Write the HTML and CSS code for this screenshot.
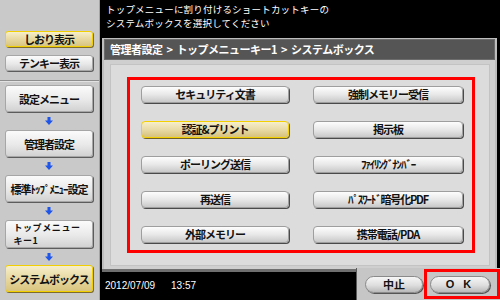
FILE: index.html
```html
<!DOCTYPE html>
<html lang="ja">
<head>
    <meta charset="UTF-8">
    <title>システムボックス選択</title>
    <link rel="stylesheet" href="styles.css">
</head>
<body>
    <div class="screen">

        <aside class="sidebar">
            <div class="side-top">
                <div class="side-btn small active">しおり表示</div>
                <div class="side-btn small">テンキー表示</div>
            </div>
            <div class="side-nav">
                <div class="side-btn">設定メニュー</div>
                <div class="arrow"><svg width="8" height="8" viewBox="0 0 8 8"><path d="M2.5 0h3v3.5H8L4 8 0 3.5h2.5z" fill="#1f55e8"/></svg></div>
                <div class="side-btn">管理者設定</div>
                <div class="arrow"><svg width="8" height="8" viewBox="0 0 8 8"><path d="M2.5 0h3v3.5H8L4 8 0 3.5h2.5z" fill="#1f55e8"/></svg></div>
                <div class="side-btn">標準ﾄｯﾌﾟﾒﾆｭｰ設定</div>
                <div class="arrow"><svg width="8" height="8" viewBox="0 0 8 8"><path d="M2.5 0h3v3.5H8L4 8 0 3.5h2.5z" fill="#1f55e8"/></svg></div>
                <div class="side-btn tall"><span class="two-line"><span>トップメニュー</span><span>キー1</span></span></div>
                <div class="arrow short"><svg width="8" height="8" viewBox="0 0 8 8"><path d="M2.5 0h3v3.5H8L4 8 0 3.5h2.5z" fill="#1f55e8"/></svg></div>
                <div class="side-btn active">システムボックス</div>
            </div>
        </aside>

        <main class="main">
            <div class="prompt">
                <p>トップメニューに割り付けるショートカットキーの</p>
                <p>システムボックスを選択してください</p>
            </div>

            <section class="panel">
                <div class="panel-head">管理者設定 &gt; トップメニューキー1 &gt; システムボックス</div>
                <div class="panel-body">
                    <div class="panel-inner">
                        <div class="choices">
                            <button class="choice">セキュリティ文書</button>
                            <button class="choice">強制メモリー受信</button>
                            <button class="choice selected">認証&amp;プリント</button>
                            <button class="choice">掲示板</button>
                            <button class="choice">ポーリング送信</button>
                            <button class="choice narrow">ﾌｧｲﾘﾝｸﾞﾅﾝﾊﾞｰ</button>
                            <button class="choice">再送信</button>
                            <button class="choice narrow">ﾊﾟｽﾜｰﾄﾞ暗号化PDF</button>
                            <button class="choice">外部メモリー</button>
                            <button class="choice">携帯電話/PDA</button>
                        </div>
                    </div>
                </div>
            </section>

            <footer class="footer">
                <div class="clock">
                    <span>2012/07/09</span>
                    <span>13:57</span>
                </div>
                <div class="actions">
                    <button class="pill cancel">中止</button>
                    <span class="ok-mark"><button class="pill ok">O K</button></span>
                </div>
            </footer>
        </main>

    </div>
</body>
</html>
```

FILE: styles.css
```css
*{
    margin: 0;
    padding: 0;
    box-sizing: border-box;
}

body{
    width: 500px;
    height: 300px;
    overflow: hidden;
    background: #000;
    font-family: "Noto Sans CJK JP", "Liberation Sans", sans-serif;
}

.screen{
    display: flex;
    height: 300px;
}

/* left column */
.sidebar{
    width: 100px;
    background: #c9c9c9;
    border-right: 1px solid #a4a4a4;
}

.side-top{
    height: 81px;
    padding: 31px 0 0 5px;
    display: flex;
    flex-direction: column;
    gap: 8px;
    border-bottom: 1px solid #8e8e8e;
    box-shadow: 0 1px 0 #e2e2e2;
}

.side-nav{
    padding: 4px 0 0 5px;
}

.side-btn{
    width: 88px;
    height: 27px;
    display: flex;
    align-items: center;
    justify-content: center;
    background: linear-gradient(#fbfbfb, #e9e9e9 55%, #d2d2d2);
    border: 1px solid #a6a6a6;
    border-radius: 3px;
    box-shadow: 1px 1px 0 #5c5c5c;
    font-size: 11px;
    font-weight: bold;
    letter-spacing: -1px;
    color: #111;
    white-space: nowrap;
}

.side-btn.small{
    height: 16px;
}

.side-btn.tall{
    height: 28px;
}

.side-btn.active{
    background: linear-gradient(#f6eecb, #e8d9a2 50%, #d8c47f);
    border-color: #f2cf00;
    box-shadow: 1px 1px 0 #7d6c2e;
}

.two-line{
    display: flex;
    flex-direction: column;
    margin-right: 4px;
    font-size: 9px;
    letter-spacing: 0.6px;
}

.two-line span{
    display: block;
    height: 13px;
    line-height: 13px;
}

.arrow{
    height: 18px;
    width: 88px;
    display: flex;
    align-items: center;
    justify-content: center;
}

.arrow.short{
    height: 17px;
}

/* right column */
.main{
    width: 400px;
    display: flex;
    flex-direction: column;
}

.prompt{
    height: 38px;
    padding: 2px 6px 0;
    color: #fff;
    font-size: 9.5px;
    letter-spacing: 0.2px;
}

.prompt p{
    height: 14px;
    line-height: 14px;
}

.panel{
    height: 234px;
    margin: 0 3px 0 2px;
    background: #bdbdbd;
    padding: 1px 2px 0;
    border-bottom: 3px solid #6f6f6f;
    display: flex;
    flex-direction: column;
}

.panel-head{
    height: 21px;
    background: #555;
    border: 1px solid #6c6c6c;
    color: #fff;
    font-size: 11px;
    font-weight: bold;
    line-height: 19px;
    padding-left: 5px;
    letter-spacing: -0.5px;
    word-spacing: 2px;
}

.panel-body{
    flex: 1;
    background: #cfcfcf;
    padding: 4px 5px 3px 6px;
}

.panel-inner{
    height: 100%;
    background: #dcdcdc;
    border: 1px solid #c3c3c3;
    padding: 12px 0 0 16px;
}

.choices{
    width: 348px;
    height: 176px;
    border: 3px solid #ff0000;
    padding: 6px 9px 0 11px;
    display: grid;
    grid-template-columns: 148px 150px;
    grid-auto-rows: 17px;
    column-gap: 24px;
    row-gap: 18px;
}

.choice{
    height: 17px;
    font-family: inherit;
    font-size: 11px;
    font-weight: bold;
    letter-spacing: -1px;
    line-height: 15px;
    color: #111;
    background: linear-gradient(#fdfdfd, #e8e8e8 50%, #c9c9c9);
    border: 1px solid #9e9e9e;
    border-radius: 4px;
    box-shadow: 1px 1px 0 #4a4a4a;
}

.choice.narrow{
    letter-spacing: -1.2px;
}

.choice.selected{
    background: linear-gradient(#f6eecb, #e9dba6 50%, #d6c17c);
    border-color: #f4d000;
    box-shadow: 1px 1px 0 #6e5f28;
}

/* bottom strip */
.footer{
    height: 28px;
    display: flex;
}

.clock{
    flex: 1;
    padding: 9px 0 0 5px;
    display: flex;
    gap: 16px;
    color: #fff;
    font-family: "Liberation Sans", sans-serif;
    font-size: 10px;
    line-height: 10px;
}

.actions{
    width: 144px;
    height: 32px;
    margin-top: -4px;
    background: #c6c6c6;
    border-left: 1px solid #5a5a5a;
    display: flex;
    align-items: flex-start;
    gap: 1px;
    padding-left: 8px;
}

.pill{
    height: 17px;
    font-family: inherit;
    font-size: 11px;
    font-weight: bold;
    line-height: 15px;
    color: #111;
    background: linear-gradient(#f6f6f6, #dedede 55%, #b9b9b9);
    border: 1px solid #8a8a8a;
    border-radius: 9px;
    box-shadow: 1px 1px 0 #555;
}

.cancel{
    width: 58px;
    margin-top: 8px;
}

.ok-mark{
    margin-top: 1px;
    border: 3px solid #ff0000;
    padding: 4px 7px 3px 3px;
}

.ok{
    width: 60px;
    display: block;
    letter-spacing: 3px;
    font-family: "Liberation Sans", sans-serif;
}
```
